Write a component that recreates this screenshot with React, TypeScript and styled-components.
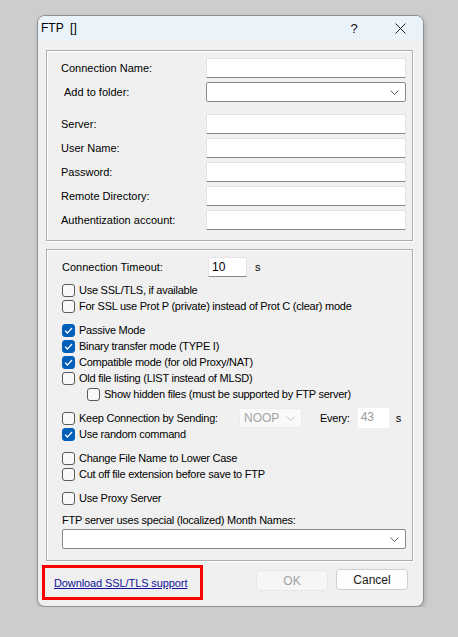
import React from "react";
import styled, { createGlobalStyle } from "styled-components";

const GlobalStyle = createGlobalStyle`
  body {
    margin: 0;
    background: #cdcdcd;
    font-family: "Liberation Sans", Arial, sans-serif;
    color: #000;
  }
  * { box-sizing: border-box; }
`;

const Page = styled.div`
  padding: 15px 0 0 37px;
`;

const Window = styled.div`
  width: 387px;
  height: 592px;
  background: #f0f0f0;
  border: 1px solid #8f8f8f;
  border-radius: 8px;
  overflow: hidden;
  display: flex;
  flex-direction: column;
  box-shadow: 1px 2px 4px rgba(0, 0, 0, 0.18);
`;

const TitleBar = styled.div`
  height: 24px;
  flex: none;
  background: #eaf3fa;
  display: flex;
  align-items: center;
  padding-left: 3px;
  font-size: 12px;
`;

const Title = styled.span`
  flex: 1;
  white-space: pre;
`;

const CaptionButton = styled.span`
  width: 46px;
  height: 24px;
  display: flex;
  align-items: center;
  justify-content: center;
  font-size: 13px;
  color: #111;
`;

const Content = styled.div`
  padding: 10px 10px 0 8px;
  display: flex;
  flex-direction: column;
  gap: 8px;
`;

const Group = styled.div<{ $pad: string }>`
  width: 367px;
  border: 1px solid #adadad;
  box-shadow: inset 1px 1px 0 #fff, 1px 1px 0 #fff;
  padding: ${(p) => p.$pad};
  display: flex;
  flex-direction: column;
`;

const FieldRow = styled.div<{ $after?: number }>`
  display: flex;
  align-items: center;
  height: 20px;
  margin-bottom: ${(p) => (p.$after ?? 4)}px;
`;

const Label = styled.span<{ $width: number; $indent?: number }>`
  width: ${(p) => p.$width}px;
  padding-left: ${(p) => p.$indent ?? 0}px;
  font-size: 11px;
  white-space: nowrap;
  flex: none;
`;

const TextBox = styled.div<{ $width: number; $muted?: boolean }>`
  width: ${(p) => p.$width}px;
  height: 20px;
  background: #fff;
  border: 1px solid #e3e3e3;
  border-bottom-color: #8a8a8a;
  font-size: 12px;
  line-height: 18px;
  padding-left: 3px;
  color: ${(p) => (p.$muted ? "#9a9a9a" : "#000")};
  flex: none;
`;

const Combo = styled.div<{ $width: number; $disabled?: boolean }>`
  width: ${(p) => p.$width}px;
  height: 20px;
  background: ${(p) => (p.$disabled ? "#f9f9f9" : "#fff")};
  border: 1px solid ${(p) => (p.$disabled ? "#ececec" : "#8a8a8a")};
  border-radius: 2px;
  display: flex;
  align-items: center;
  justify-content: space-between;
  padding: 0 6px 0 4px;
  font-size: 12px;
  color: ${(p) => (p.$disabled ? "#a3a3a3" : "#000")};
  flex: none;
`;

const Unit = styled.span<{ $gap: number }>`
  margin-left: ${(p) => p.$gap}px;
  font-size: 11px;
`;

const CheckRow = styled.div<{ $indent?: number; $after?: number }>`
  display: flex;
  align-items: center;
  height: 16px;
  padding-left: ${(p) => p.$indent ?? 0}px;
  margin-bottom: ${(p) => p.$after ?? 0}px;
  font-size: 11px;
  letter-spacing: -0.25px;
  white-space: nowrap;
`;

const Box = styled.span<{ $checked?: boolean }>`
  width: 13px;
  height: 13px;
  border-radius: 3px;
  flex: none;
  margin-right: 4px;
  display: flex;
  align-items: center;
  justify-content: center;
  background: ${(p) => (p.$checked ? "#005fb8" : "#f8f8f8")};
  border: 1px solid ${(p) => (p.$checked ? "#005fb8" : "#5a5a5a")};
`;

const CheckLabel = styled.span<{ $width?: number }>`
  width: ${(p) => (p.$width ? `${p.$width}px` : "auto")};
  flex: none;
`;

const MonthLabel = styled.div`
  font-size: 11px;
  letter-spacing: -0.25px;
  height: 14px;
  line-height: 14px;
  margin: 7px 0 2px;
`;

const Footer = styled.div`
  display: flex;
  align-items: flex-start;
  padding: 4px 15px 0 4px;
`;

const LinkBox = styled.div`
  width: 161px;
  height: 35px;
  border: 3px solid #ff0000;
  display: flex;
  align-items: center;
  padding-left: 9px;
  margin-right: auto;
`;

const Link = styled.a`
  font-size: 11px;
  letter-spacing: -0.1px;
  color: #10109a;
  text-decoration: underline;
  white-space: nowrap;
`;

const Button = styled.div<{ $disabled?: boolean }>`
  width: 72px;
  height: 21px;
  margin-top: ${(p) => (p.$disabled ? 5 : 4)}px;
  margin-left: 8px;
  border: 1px solid ${(p) => (p.$disabled ? "#e6e6e6" : "#cfcfcf")};
  border-radius: 4px;
  background: ${(p) => (p.$disabled ? "#f6f6f6" : "#fdfdfd")};
  color: ${(p) => (p.$disabled ? "#a0a0a0" : "#1a1a1a")};
  font-size: 12px;
  display: flex;
  align-items: center;
  justify-content: center;
`;

const Chevron = ({ color = "#606060" }: { color?: string }) => (
  <svg width="9" height="5" viewBox="0 0 9 5">
    <path d="M0.5 0.5 L4.5 4.5 L8.5 0.5" fill="none" stroke={color} strokeWidth="1" />
  </svg>
);

const Tick = () => (
  <svg width="9" height="7" viewBox="0 0 9 7">
    <path d="M1 3.6 L3.4 6 L8 1" fill="none" stroke="#fff" strokeWidth="1.3" />
  </svg>
);

const Check = ({
  text,
  checked,
  indent,
  after,
}: {
  text: string;
  checked?: boolean;
  indent?: number;
  after?: number;
}) => (
  <CheckRow $indent={indent} $after={after}>
    <Box $checked={checked}>{checked && <Tick />}</Box>
    <CheckLabel>{text}</CheckLabel>
  </CheckRow>
);

const fields = ["Server:", "User Name:", "Password:", "Remote Directory:", "Authentization account:"];

export default function App() {
  return (
    <Page>
      <GlobalStyle />
      <Window>
        <TitleBar>
          <Title>FTP  []</Title>
          <CaptionButton>?</CaptionButton>
          <CaptionButton>
            <svg width="11" height="11" viewBox="0 0 11 11">
              <path d="M0.5 0.5 L10.5 10.5 M10.5 0.5 L0.5 10.5" stroke="#222" strokeWidth="1" />
            </svg>
          </CaptionButton>
        </TitleBar>
        <Content>
          <Group $pad="7px 0 10px 14px">
            <FieldRow>
              <Label $width={145}>Connection Name:</Label>
              <TextBox $width={200} />
            </FieldRow>
            <FieldRow $after={12}>
              <Label $width={145} $indent={3}>Add to folder:</Label>
              <Combo $width={200}>
                <span />
                <Chevron />
              </Combo>
            </FieldRow>
            {fields.map((f, i) => (
              <FieldRow key={f} $after={i === fields.length - 1 ? 0 : 4}>
                <Label $width={145}>{f}</Label>
                <TextBox $width={200} />
              </FieldRow>
            ))}
          </Group>
          <Group $pad="7px 0 11px 15px">
            <FieldRow $after={5}>
              <Label $width={146}>Connection Timeout:</Label>
              <TextBox $width={39}>10</TextBox>
              <Unit $gap={8}>s</Unit>
            </FieldRow>
            <Check text="Use SSL/TLS, if available" />
            <Check text="For SSL use Prot P (private) instead of Prot C (clear) mode" after={8} />
            <Check text="Passive Mode" checked />
            <Check text="Binary transfer mode (TYPE I)" checked />
            <Check text="Compatible mode (for old Proxy/NAT)" checked />
            <Check text="Old file listing (LIST instead of MLSD)" />
            <Check text="Show hidden files (must be supported by FTP server)" indent={25} after={8} />
            <CheckRow>
              <Box />
              <CheckLabel $width={160}>Keep Connection by Sending:</CheckLabel>
              <Combo $width={63} $disabled style={{ margin: "-2px 0", letterSpacing: 0 }}>
                <span>NOOP</span>
                <Chevron color="#c4c4c4" />
              </Combo>
              <Unit $gap={18}>Every:</Unit>
              <TextBox $width={31} $muted style={{ marginLeft: 8, border: "none", letterSpacing: 0 }}>
                43
              </TextBox>
              <Unit $gap={7}>s</Unit>
            </CheckRow>
            <Check text="Use random command" checked after={8} />
            <Check text="Change File Name to Lower Case" />
            <Check text="Cut off file extension before save to FTP" after={8} />
            <Check text="Use Proxy Server" />
            <MonthLabel>FTP server uses special (localized) Month Names:</MonthLabel>
            <Combo $width={344}>
              <span />
              <Chevron />
            </Combo>
          </Group>
        </Content>
        <Footer>
          <LinkBox>
            <Link href="#ssl">Download SSL/TLS support</Link>
          </LinkBox>
          <Button $disabled>OK</Button>
          <Button>Cancel</Button>
        </Footer>
      </Window>
    </Page>
  );
}
